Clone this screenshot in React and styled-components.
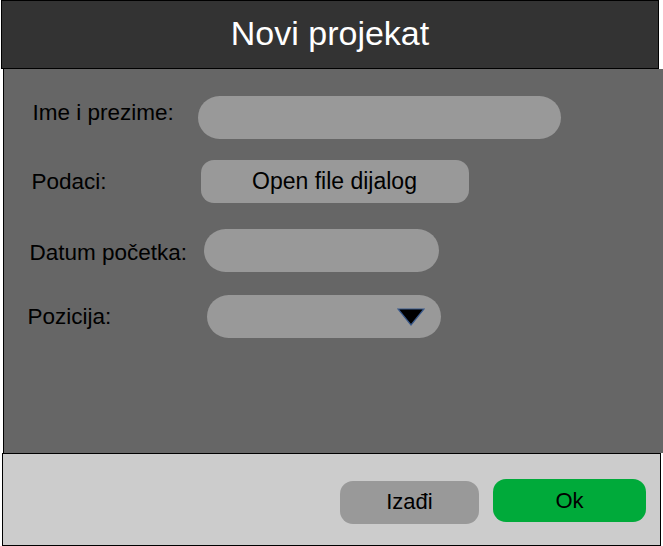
import React from "react";
import styled, { createGlobalStyle } from "styled-components";

const GlobalStyle = createGlobalStyle`
  html, body {
    margin: 0;
    padding: 0;
    background: #ffffff;
  }
  body {
    font-family: "Liberation Sans", Arial, sans-serif;
  }
`;

const Frame = styled.div`
  width: 663px;
  height: 546px;
  display: flex;
  flex-direction: column;
  box-sizing: border-box;
`;

const Header = styled.div`
  margin-left: 1px;
  width: 658px;
  height: 69px;
  box-sizing: border-box;
  background-color: #333333;
  border: 1.5px solid #000;
  display: flex;
  align-items: center;
  justify-content: center;
  color: #ffffff;
  font-size: 34px;
  padding-bottom: 2px;
`;

const Body = styled.div`
  margin-left: 3px;
  flex: 1;
  background-color: #666666;
  border-left: 1.5px solid #000;
  display: flex;
  flex-direction: column;
  padding-top: 27px;
  box-sizing: border-box;
`;

const Row = styled.div`
  display: flex;
  align-items: center;
  padding-left: ${props => props.indent}px;
  margin-bottom: ${props => props.gap}px;
`;

const Label = styled.span`
  width: ${props => props.width}px;
  font-size: 22.5px;
  color: #000;
  position: relative;
  top: ${props => props.lift || 0}px;
`;

const Field = styled.div`
  width: ${props => props.width}px;
  height: 43px;
  border-radius: 22px;
  background-color: #999999;
  display: flex;
  align-items: center;
  justify-content: flex-end;
  box-sizing: border-box;
  padding-right: 16px;
`;

const FileButton = styled.div`
  width: 268px;
  height: 43px;
  border-radius: 13px;
  background-color: #999999;
  display: flex;
  align-items: center;
  justify-content: center;
  font-size: 23px;
  color: #000;
`;

const Footer = styled.div`
  margin-left: 2px;
  width: 659px;
  height: 93px;
  box-sizing: border-box;
  background-color: #cccccc;
  border: 1.5px solid #000;
  display: flex;
  align-items: center;
  justify-content: flex-end;
  gap: 14px;
  padding-right: 14px;
  padding-top: 2px;
`;

const ActionButton = styled.div`
  width: ${props => props.width}px;
  height: 43px;
  border-radius: 13px;
  background-color: ${props => props.bg};
  display: flex;
  align-items: center;
  justify-content: center;
  font-size: 22px;
  color: #000;
  margin-top: ${props => props.offset || 0}px;
`;

const Arrow = () => (
  <svg width="28" height="18" viewBox="0 0 28 18">
    <polygon points="1,1 27,1 14,17" fill="#000" stroke="#3a5a8c" strokeWidth="1.2" />
  </svg>
);

export default function App() {
  return (
    <>
      <GlobalStyle />
      <Frame>
        <Header>Novi projekat</Header>
        <Body>
          <Row indent={28.5} gap={21}>
            <Label width={165} lift={-5}>Ime i prezime:</Label>
            <Field width={363} />
          </Row>
          <Row indent={27.5} gap={26}>
            <Label width={169}>Podaci:</Label>
            <FileButton>Open file dijalog</FileButton>
          </Row>
          <Row indent={25.5} gap={23}>
            <Label width={174} lift={2}>Datum početka:</Label>
            <Field width={235} />
          </Row>
          <Row indent={23.5} gap={0}>
            <Label width={179}>Pozicija:</Label>
            <Field width={234}>
              <Arrow />
            </Field>
          </Row>
        </Body>
        <Footer>
          <ActionButton width={139} bg="#999999" offset={3}>Izađi</ActionButton>
          <ActionButton width={153} bg="#00aa3a">Ok</ActionButton>
        </Footer>
      </Frame>
    </>
  );
}
